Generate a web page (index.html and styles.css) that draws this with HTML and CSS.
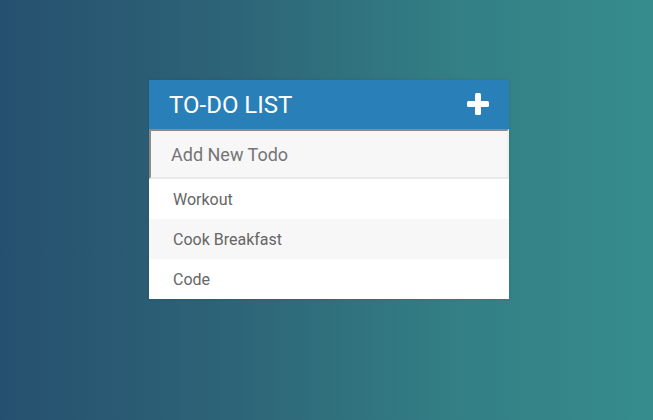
FILE: index.html
```html
<!DOCTYPE html>
<html>
<head>
<meta charset="utf-8">
<link rel="stylesheet" href="styles.css">
</head>
<body>
<div class="container">
  <h1 class="title">To-Do List
    <svg class="plus" width="22" height="22" viewBox="0 0 22 22"><rect x="8" y="0" width="6" height="22" rx="1.5" fill="#fff"/><rect x="0" y="8" width="22" height="6" rx="1.5" fill="#fff"/></svg>
  </h1>
  <input class="new-todo" type="text" placeholder="Add New Todo">
  <ul class="list">
    <li class="item">Workout</li>
    <li class="item">Cook Breakfast</li>
    <li class="item">Code</li>
  </ul>
</div>
</body>
</html>
```
FILE: styles.css
```css
html, body {
  margin: 0;
  height: 100%;
}
body {
  font-family: Roboto, "Liberation Sans", sans-serif;
  background: linear-gradient(to right, #26506f 0%, #2d6477 35%, #337f85 70%, #368c8c 100%);
  overflow: hidden;
}
.container {
  width: 360px;
  margin: 80px 0 0 149px;
  background: #f7f7f7;
  box-shadow: 0 0 3px rgba(0, 0, 0, 0.1);
}
.title {
  margin: 0;
  background: #2980b9;
  color: #fff;
  text-transform: uppercase;
  font-size: 24px;
  font-weight: normal;
  line-height: 29px;
  padding: 11px 20px 9px;
  display: flex;
  justify-content: space-between;
  align-items: center;
}
.plus {
  display: block;
  margin-top: -3px;
}
.new-todo {
  display: block;
  width: 100%;
  box-sizing: border-box;
  font-family: Roboto, "Liberation Sans", sans-serif;
  font-size: 18px;
  height: 50px;
  padding: 13px 13px 13px 20px;
  background: #f7f7f7;
  border-style: solid;
  border-width: 2px;
  border-color: #8a8a8a #f0f0f0 #eaeaea #8a8a8a;
  margin: 0;
  outline: none;
}
.new-todo::placeholder {
  color: #757575;
}
.list {
  list-style: none;
  margin: 0;
  padding: 0;
}
.item {
  background: #fff;
  height: 40px;
  box-sizing: border-box;
  padding: 1px 0 0 24px;
  line-height: 40px;
  overflow: hidden;
  color: #666;
  font-size: 16px;
}
.item:nth-child(2n) {
  background: #f7f7f7;
}
```
